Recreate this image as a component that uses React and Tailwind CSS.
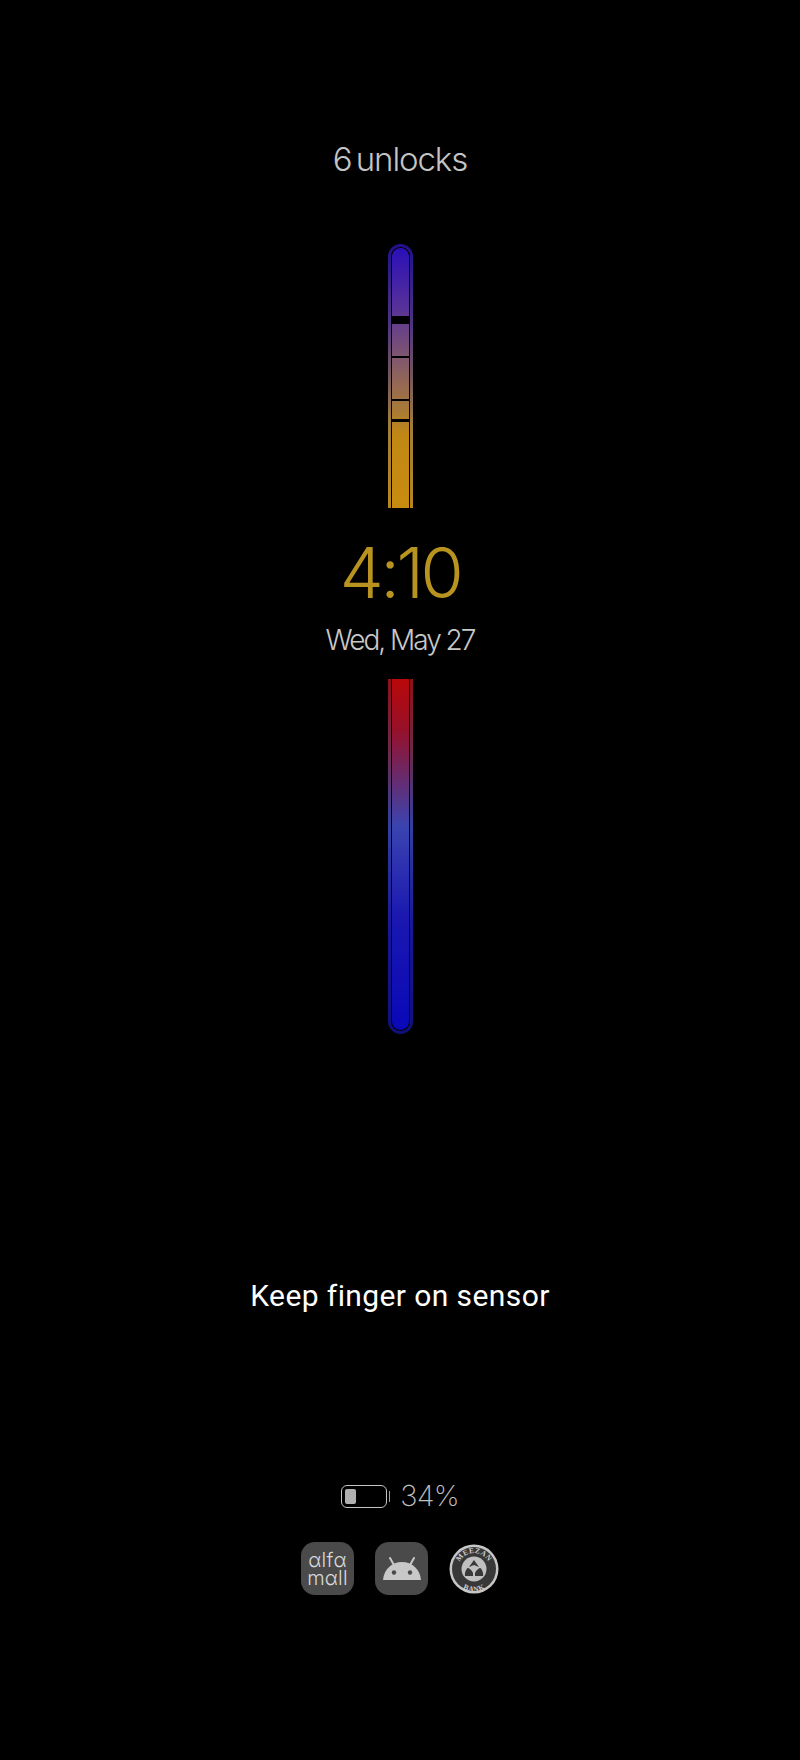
const thin = { fontFamily: 'Inter, sans-serif' }

// upper bar: unlock history, split in segments
function UnlockBar() {
  return (
    <div className="h-[264px] w-[25px] rounded-t-full bg-[linear-gradient(180deg,#20108a,#4f3380_30%,#74565f_50%,#a07c3a_68%,#b5881e)] px-[3px] pt-[3px]">
      <div className="h-full rounded-t-full bg-black px-px pt-px">
        <div className="flex h-full flex-col rounded-t-full bg-[linear-gradient(180deg,#2a0fb8,#55309a_22%,#80566f_42%,#a3763f_60%,#c08814_72%,#c88c10)]">
          <div className="h-[68px] shrink-0" />
          <div className="h-2 shrink-0 bg-black" />
          <div className="h-[32px] shrink-0" />
          <div className="h-[2px] shrink-0 bg-black" />
          <div className="h-[41px] shrink-0" />
          <div className="h-[2px] shrink-0 bg-black" />
          <div className="h-[18px] shrink-0" />
          <div className="h-[3px] shrink-0 bg-black" />
          <div className="flex-1" />
        </div>
      </div>
    </div>
  )
}

function StepBar() {
  return (
    <div className="h-[355px] w-[25px] rounded-b-full bg-[linear-gradient(180deg,#900f18,#6a2a50_22%,#3040a0_42%,#18169a_70%,#10107a)] px-[3px] pb-[3px]">
      <div className="h-full rounded-b-full bg-black px-px pb-px">
        <div className="h-full rounded-b-full bg-[linear-gradient(180deg,#b80808,#981028_14%,#3a44b0_42%,#1a18b0_68%,#0a08b8)]" />
      </div>
    </div>
  )
}

function Battery() {
  return (
    <div className="flex items-center">
      <div className="flex h-[23px] w-[46px] items-center rounded-[6px] border border-[#c4c4c4] pl-[3px]">
        <div className="h-[15px] w-[11px] rounded-[2px] bg-[#b0b0b0]" />
      </div>
      <div className="ml-[2px] h-[11px] w-px bg-[#a0a0a0]" />
    </div>
  )
}

function AndroidIcon() {
  return (
    <svg width="40" height="24" viewBox="0 0 40 24" fill="#c8c8c8">
      <path d="M1 23 C2 12 10 5 20 5 C30 5 38 12 39 23 Z" />
      <path d="M8 1 L12.5 9 M32 1 L27.5 9" stroke="#c8c8c8" strokeWidth="2" strokeLinecap="round" />
      <circle cx="12" cy="15.5" r="2.2" fill="#4a4a4a" />
      <circle cx="28" cy="15.5" r="2.2" fill="#4a4a4a" />
    </svg>
  )
}

function MeezanIcon() {
  return (
    <svg width="50" height="50" viewBox="0 0 50 50">
      <circle cx="25" cy="25" r="24.5" fill="#c6c6c6" />
      <circle cx="25" cy="25" r="22" fill="#383838" />
      <circle cx="25" cy="25" r="12.5" fill="#c0c0c0" />
      <path id="meezan-top" d="M9 25 A16 16 0 0 1 41 25" fill="none" />
      <path id="meezan-bottom" d="M4.5 27 A20.5 20.5 0 0 0 45.5 27" fill="none" />
      <text fontSize="7.5" fontWeight="700" fill="#cfcfcf" fontFamily="'Liberation Serif', serif" letterSpacing="0.4">
        <textPath href="#meezan-top" startOffset="50%" textAnchor="middle">MEEZAN</textPath>
      </text>
      <text fontSize="7.5" fontWeight="700" fill="#cfcfcf" fontFamily="'Liberation Serif', serif" letterSpacing="0.4">
        <textPath href="#meezan-bottom" startOffset="50%" textAnchor="middle">BANK</textPath>
      </text>
      <path d="M25 16 L30 23 L25 21 L20 23 Z" fill="#383838" />
      <path d="M18.5 24 C20 24 23 26 24 29 L24 32 L16 32 C15.5 29 16.5 26 18.5 24 Z" fill="#383838" />
      <path d="M31.5 24 C30 24 27 26 26 29 L26 32 L34 32 C34.5 29 33.5 26 31.5 24 Z" fill="#383838" />
    </svg>
  )
}

export default function App() {
  return (
    <div className="flex h-[1760px] w-full flex-col items-center bg-black" style={thin}>
      <div className="mt-[138px] text-[33px] leading-[42px] font-light tracking-[-1.1px] [word-spacing:-4px] text-[#c4c4c4]">6 unlocks</div>

      <div className="mt-[64px]">
        <UnlockBar />
      </div>

      <div className="mt-[25px] text-[70px] leading-[80px] font-light tracking-[-3.5px] text-[#b8931f]">4:10</div>
      <div className="mt-[9px] text-[28px] leading-[36px] font-light tracking-[-2px] text-[#c8c8c8]">Wed, May 27</div>

      <div className="mt-[21px]">
        <StepBar />
      </div>

      <div
        className="mt-[242px] text-[30px] leading-[40px] tracking-[0.4px] text-white"
        style={{ fontFamily: 'Roboto, sans-serif' }}
      >
        Keep finger on sensor
      </div>

      <div className="mt-[162px] flex items-center gap-[10px]">
        <Battery />
        <span className="text-[29px] leading-[36px] font-extralight tracking-[-0.8px] text-[#c0c0c0]">34%</span>
      </div>

      <div className="mt-[28px] flex items-center gap-[21px]">
        <div className="flex h-[53px] w-[53px] flex-col items-center justify-center rounded-[14px] bg-[#4a4a4a] text-[20px] leading-[18px] font-light tracking-[0.2px] text-[#d8d8d8]">
          <span>αlfα</span>
          <span>mαll</span>
        </div>
        <div className="flex h-[53px] w-[53px] items-center justify-center rounded-[14px] bg-[#4a4a4a]">
          <AndroidIcon />
        </div>
        <MeezanIcon />
      </div>
    </div>
  )
}
